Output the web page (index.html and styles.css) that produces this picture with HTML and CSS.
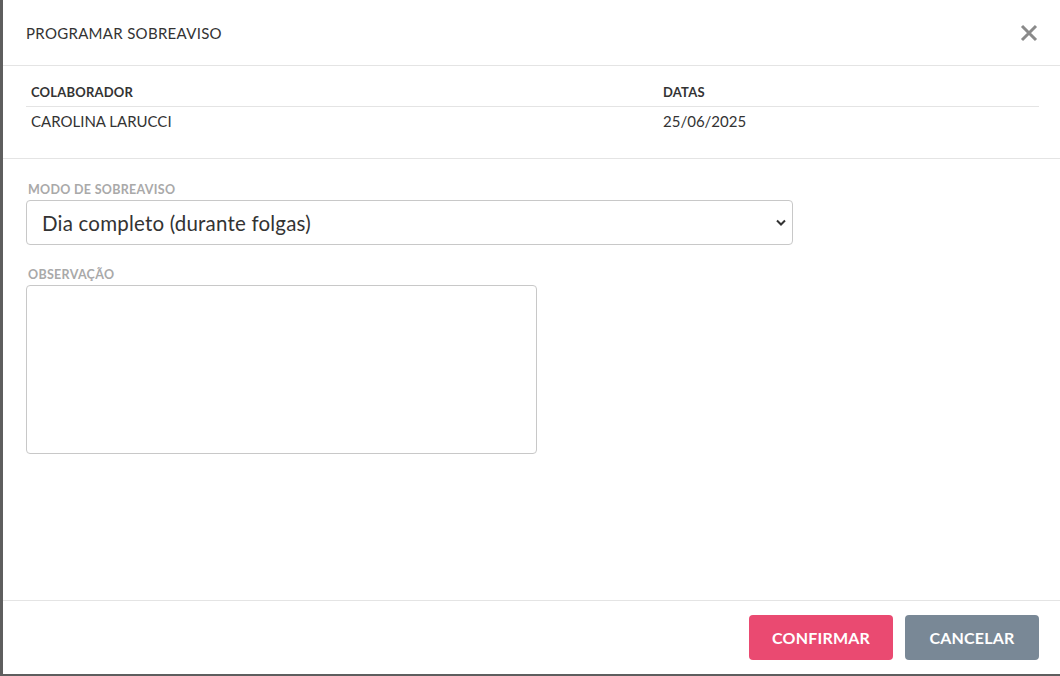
FILE: index.html
```html
<!DOCTYPE html>
<html lang="pt">
<head>
<meta charset="utf-8">
<link rel="stylesheet" href="styles.css">
</head>
<body>
<div class="modal">
  <div class="modal-header">
    <h1 class="modal-title">PROGRAMAR SOBREAVISO</h1>
    <button class="close-btn" aria-label="Fechar">
      <svg width="18" height="18" viewBox="0 0 18 18"><path d="M2 2 L16 16 M16 2 L2 16" stroke="#8a8a8a" stroke-width="3" stroke-linecap="butt"/></svg>
    </button>
  </div>
  <div class="info">
    <table class="info-table">
      <thead>
        <tr><th class="col-a">COLABORADOR</th><th>DATAS</th></tr>
      </thead>
      <tbody>
        <tr><td>CAROLINA LARUCCI</td><td>25/06/2025</td></tr>
      </tbody>
    </table>
  </div>
  <div class="modal-body">
    <label class="field-label">MODO DE SOBREAVISO</label>
    <div class="select">
      <span>Dia completo (durante folgas)</span>
      <svg width="10" height="7" viewBox="0 0 10 7"><path d="M1 1.5 L5 5.5 L9 1.5" fill="none" stroke="#333" stroke-width="2"/></svg>
    </div>
    <label class="field-label second">OBSERVAÇÃO</label>
    <div class="textarea"></div>
  </div>
  <div class="modal-footer">
    <button class="btn btn-confirm">CONFIRMAR</button>
    <button class="btn btn-cancel">CANCELAR</button>
  </div>
</div>
</body>
</html>
```

FILE: styles.css
```css
* { box-sizing: border-box; }
html, body { margin: 0; padding: 0; }
body {
  background: #5e5e5e;
  width: 1060px;
  height: 676px;
  overflow: hidden;
  font-family: Lato, "Noto Sans", sans-serif;
  color: #333;
}
.modal {
  margin-left: 3px;
  width: 1057px;
  height: 674px;
  background: #fff;
  display: flex;
  flex-direction: column;
}
.modal-header {
  height: 66px;
  border-bottom: 1px solid #e4e4e4;
  display: flex;
  align-items: center;
  justify-content: space-between;
  padding: 0 22px 0 23px;
}
.modal-title {
  margin: 0;
  font-size: 15px;
  font-weight: 400;
  color: #333;
  letter-spacing: 0.3px;
}
.close-btn {
  background: none;
  border: 0;
  padding: 0;
  width: 18px;
  height: 18px;
  display: flex;
}
.info {
  padding: 13px 21px 20px 23px;
  border-bottom: 1px solid #e4e4e4;
}
.info-table {
  width: 100%;
  border-collapse: collapse;
}
.info-table th {
  text-align: left;
  font-size: 13px;
  font-weight: 700;
  color: #333;
  padding: 5px;
  height: 27px;
  letter-spacing: 0.2px;
  border-bottom: 1px solid #e4e4e4;
}
.info-table .col-a { width: 632px; }
.info-table td {
  font-size: 15px;
  padding: 5px 5px 7px;
  height: 32px;
  color: #333;
}
.modal-body {
  flex: 1;
  padding: 23px 20px 0 23px;
  display: flex;
  flex-direction: column;
  align-items: flex-start;
}
.field-label {
  font-size: 12.5px;
  font-weight: 700;
  color: #a9a9a9;
  margin-left: 2px;
  margin-bottom: 3px;
  line-height: 15px;
  letter-spacing: 0.3px;
}
.field-label.second { margin-top: 22px; }
.select {
  width: 767px;
  height: 45px;
  border: 1px solid #c8c8c8;
  border-radius: 4px;
  display: flex;
  align-items: center;
  justify-content: space-between;
  padding: 0 6px 0 15px;
  font-size: 20.5px;
  letter-spacing: 0.2px;
  color: #333;
}
.textarea {
  width: 511px;
  height: 169px;
  border: 1px solid #c8c8c8;
  border-radius: 4px;
}
.modal-footer {
  height: 74px;
  border-top: 1px solid #e4e4e4;
  display: flex;
  align-items: center;
  justify-content: flex-end;
  gap: 12px;
  padding: 0 21px 0 0;
}
.btn {
  height: 45px;
  border: 0;
  border-radius: 4px;
  color: #fff;
  font-family: Lato, "Noto Sans", sans-serif;
  font-size: 16px;
  font-weight: 700;
  padding: 0;
  letter-spacing: 0.2px;
}
.btn-confirm { width: 144px; background: #ea4a71; }
.btn-cancel { width: 134px; background: #798896; }
```
